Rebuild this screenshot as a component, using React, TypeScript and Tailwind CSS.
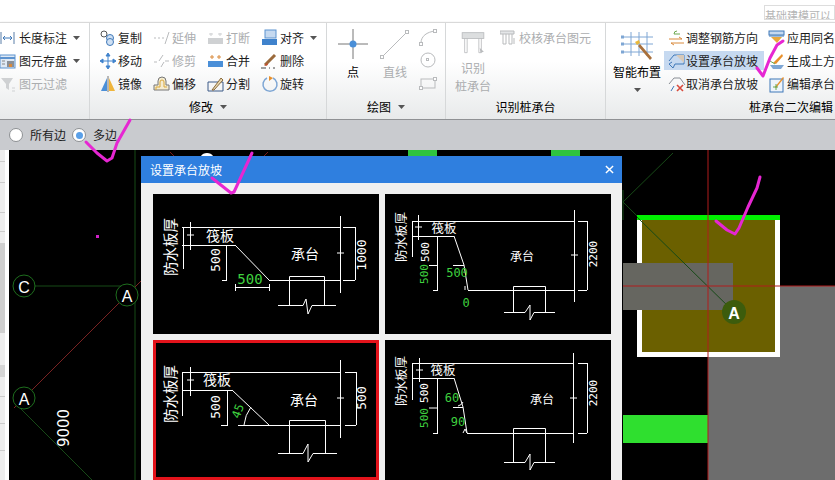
import type { ReactNode } from "react";

const CJK = { fontFamily: '"Noto Sans CJK SC", "Liberation Sans", sans-serif' };

const blue = "#4a8fd8";
const gray = "#b9bbbd";

function Icon({ children }: { children: ReactNode }) {
  return (
    <svg viewBox="0 0 18 18" className="w-[18px] h-[18px] shrink-0" fill="none">
      {children}
    </svg>
  );
}

const icons: Record<string, ReactNode> = {
  length: (
    <>
      <path d="M1 3v12M14 3v12" stroke="#5b7fa8" />
      <path d="M3 9h9M5 7 3 9l2 2M10 7l2 2-2 2" stroke="#3f78b8" />
    </>
  ),
  store: (
    <>
      <rect x="0" y="3" width="15" height="13" fill="#dfe9f4" stroke="#5d93cf" />
      <path d="M0 6h15" stroke="#5d93cf" strokeWidth="2" />
      <path d="M2 9h3M2 12h3" stroke="#888" />
      <rect x="7" y="9" width="7" height="6" fill="#8a8f96" />
      <rect x="9" y="12" width="3" height="3" fill="#d98a3c" />
    </>
  ),
  funnel: (
    <>
      <path d="M1 3h12L9 9v6l-3-2V9z" fill="#cfd1d3" />
      <path d="M12 13h3M12 16h3" stroke="#cfd1d3" />
    </>
  ),
  copy: (
    <>
      <circle cx="5" cy="5" r="3" stroke="#555" fill="#fff" />
      <circle cx="11" cy="9" r="3.5" stroke="#3f78b8" fill="#cfe0f3" />
      <circle cx="11" cy="13" r="3.5" stroke="#3f78b8" fill="#cfe0f3" />
    </>
  ),
  move: (
    <path
      d="M9 1 7 4h4zM9 17l-2-3h4zM1 9l3-2v4zM17 9l-3-2v4zM9 4v10M4 9h10"
      fill="#3f82cc"
      stroke="#3f82cc"
    />
  ),
  mirror: (
    <>
      <path d="M8 3v13H2z" fill="#4a8fd8" />
      <path d="M10 3v13h6z" fill="#efb53c" />
      <path d="M9 1v16" stroke="#777" />
    </>
  ),
  extend: <path d="M1 9h2M5 9h2M9 9h2M12 15l4-12" stroke={gray} />,
  trim: <path d="M1 10h3M6 9l4-6M8 15l3-5M12 9h4" stroke={gray} />,
  break: (
    <>
      <rect x="1" y="9" width="15" height="6" fill="#cfd1d3" />
      <path d="M4 4v3M13 4v3M2 5h4M11 5h4" stroke="#cfd1d3" />
    </>
  ),
  merge: (
    <>
      <rect x="1" y="9" width="15" height="6" fill="#4a8fd8" />
      <path d="M5 3v4M12 3v4M3 5h4M10 5h4" stroke="#d98a3c" />
    </>
  ),
  align: (
    <>
      <rect x="4" y="1" width="11" height="8" fill="#c5d9f0" stroke="#5d93cf" />
      <rect x="1" y="10" width="15" height="6" fill="#3f82cc" />
    </>
  ),
  del: (
    <>
      <path d="M4 13 14 3" stroke="#9b6a3c" strokeWidth="3" />
      <path d="M3 14l3-3 1 2z" fill="#c94a2c" />
      <path d="M0 16h5M8 16h1M12 16h2" stroke="#444" />
    </>
  ),
  offset: (
    <>
      <path d="M1 15V10h4V6a4 4 0 0 1 8 0v4h3v5z" stroke="#777" fill="#f5ecd0" />
      <path d="M3 15v-3h4V7a2 2 0 0 1 4 0v5h3" stroke="#d9a83c" />
    </>
  ),
  split: (
    <>
      <path d="M1 7h15v9H1z" stroke="#3c5a88" />
      <path d="M5 15 14 3l2 2-9 10z" fill="#e8d8b0" stroke="#8a6a3c" />
    </>
  ),
  rotate: (
    <>
      <path d="M6 3a7 7 0 1 0 6 0" stroke="#7ea6d4" strokeWidth="1.5" />
      <path d="M8 1l4 2-4 3z" fill="#e8902c" />
    </>
  ),
  check: (
    <>
      <path d="M0 2h14v3H0z" fill="#e4e6e8" stroke={gray} />
      <path d="M3 5v10h3V5M9 5v10h3V5" stroke={gray} />
      <path d="M14 9v6" stroke={gray} />
    </>
  ),
  adjust: (
    <>
      <path d="M9 2a3 3 0 0 0-3 3h6" stroke="#6aa84f" />
      <path d="M1 10h13l-3-2M16 14H3l3 2" stroke="#d98a3c" />
    </>
  ),
  setSlope: (
    <>
      <path d="M1 9l5-6h10v9H7l-2 4-4-4 3-2" stroke="#3f78b8" />
      <path d="M8 3l8 8V3z" fill="#d8c9b8" />
    </>
  ),
  cancelSlope: (
    <>
      <path d="M1 9l5-6h6l5 7" stroke="#8a8f96" />
      <path d="M3 16l3-5" stroke="#3f78b8" />
      <path d="M9 10l6 6M15 10l-6 6" stroke="#d84a3c" strokeWidth="1.6" />
    </>
  ),
  apply: (
    <>
      <rect x="1" y="2" width="15" height="4" fill="#c5d9f0" stroke="#3f78b8" />
      <path d="M3 8h11l-5 6z" fill="#e8a83c" />
      <path d="M1 7h15" stroke="#3f78b8" />
    </>
  ),
  earth: (
    <>
      <path d="M5 11 14 2l1 2-7 8z" fill="#e8902c" />
      <path d="M2 13h14l-3 4H5z" fill="#7ea6d4" />
      <path d="M2 9l5 3" stroke="#6aa84f" />
    </>
  ),
  edit: (
    <>
      <rect x="2" y="4" width="13" height="13" stroke="#3f78b8" fill="#eef4fb" />
      <path d="M7 12 15 2l1 1-8 10z" fill="#e8902c" />
      <path d="M5 12h5M8 9v6" stroke="#6aa84f" />
    </>
  ),
};

function Caret({ className = "" }: { className?: string }) {
  return (
    <svg viewBox="0 0 7 4" className={`w-[7px] h-[4px] shrink-0 ${className}`}>
      <path d="M0 0h7L3.5 4z" fill="#555" />
    </svg>
  );
}

function Tool({
  icon,
  label,
  off,
  caret,
  gap = "gap-px",
}: {
  icon: string;
  label: string;
  off?: boolean;
  caret?: boolean;
  gap?: string;
}) {
  return (
    <div className={`flex h-[23px] items-center whitespace-nowrap ${gap}`}>
      <Icon>{icons[icon]}</Icon>
      <span className={off ? "text-[#abadaf]" : "text-[#1c1c1c]"}>{label}</span>
      {caret && <Caret className="ml-[5px]" />}
    </div>
  );
}

function Group({
  width,
  label,
  caret,
  end,
  children,
}: {
  width: string;
  label: string;
  caret?: boolean;
  end?: boolean;
  children: ReactNode;
}) {
  return (
    <div className={`flex shrink-0 flex-col border-r border-[#d6d8d9] ${width}`}>
      <div className="flex h-[72px] pt-[3px]">{children}</div>
      {label ? (
        <div
          className={`flex h-[24px] items-center gap-[7px] text-black ${end ? "justify-start pl-[143px]" : "justify-center"}`}
        >
          <span className="whitespace-nowrap">{label}</span>
          {caret && <Caret />}
        </div>
      ) : null}
    </div>
  );
}

function Ribbon() {
  return (
    <div
      className="flex h-[98px] shrink-0 border-y border-t-[#d9d9d9] border-b-[#8f9194] bg-gradient-to-b from-white from-40% to-[#e8eaeb] text-[12px] leading-none shadow-[0_1px_2px_#0005]"
      style={CJK}
    >
      <Group width="w-[90px]" label="">
        <div className="flex flex-col">
          <Tool icon="length" label="长度标注" caret />
          <Tool icon="store" label="图元存盘" caret />
          <Tool icon="funnel" label="图元过滤" off />
        </div>
      </Group>
      <Group width="w-[237px]" label="修改" caret>
        <div className="grid grid-cols-[54px_54px_54px_54px] pl-[9px]">
          <Tool icon="copy" label="复制" />
          <Tool icon="extend" label="延伸" off />
          <Tool icon="break" label="打断" off />
          <Tool icon="align" label="对齐" caret />
          <Tool icon="move" label="移动" />
          <Tool icon="trim" label="修剪" off />
          <Tool icon="merge" label="合并" />
          <Tool icon="del" label="删除" />
          <Tool icon="mirror" label="镜像" />
          <Tool icon="offset" label="偏移" />
          <Tool icon="split" label="分割" />
          <Tool icon="rotate" label="旋转" />
        </div>
      </Group>
      <Group width="w-[119px]" label="绘图" caret>
        <div className="flex pl-[10px]">
          <div className="flex w-[32px] flex-col items-center">
            <svg viewBox="0 0 32 36" className="h-[36px] w-[32px]">
              <path d="M1 18h30M16 3v30" stroke="#777" />
              <circle cx="16" cy="18" r="3.5" fill={blue} />
            </svg>
            <span className="mt-[4px]">点</span>
          </div>
          <div className="ml-[11px] flex w-[30px] flex-col items-center text-[#abadaf]">
            <svg viewBox="0 0 30 36" className="h-[36px] w-[30px]" fill="none">
              <path d="M2 31 27 6" stroke={gray} />
              <rect x="0.500" y="29.500" width="3" height="3" fill="#fff" stroke={gray} />
              <rect x="25.500" y="4.500" width="3" height="3" fill="#fff" stroke={gray} />
            </svg>
            <span className="mt-[4px]">直线</span>
          </div>
          <div className="ml-[8px] flex flex-col items-center">
            <svg viewBox="0 0 20 66" className="h-[66px] w-[20px]" fill="none" stroke={gray}>
              <path d="M3 17c0-7 6-11 14-12" />
              <rect x="1.500" y="16.500" width="3" height="3" fill="#fff" />
              <rect x="15.500" y="3.500" width="3" height="3" fill="#fff" />
              <circle cx="10" cy="34" r="7" />
              <rect x="8.500" y="32.500" width="2" height="2" />
              <rect x="3" y="53" width="14" height="9" />
              <rect x="1.500" y="60.500" width="3" height="3" fill="#fff" />
              <rect x="15.500" y="51.500" width="3" height="3" fill="#fff" />
            </svg>
          </div>
        </div>
      </Group>
      <Group width="w-[160px]" label="识别桩承台">
        <div className="flex pl-[8px]">
          <div className="flex w-[38px] flex-col items-center text-[#abadaf]">
            <svg viewBox="0 0 38 36" className="h-[36px] w-[38px]" fill="none">
              <rect x="6" y="8" width="26" height="7" fill="#dcdedf" stroke={gray} />
              <path d="M9 15v17h3V15M26 15v17h3V15" stroke={gray} />
              <path d="M27 26l5 5-4 1z" fill={gray} />
            </svg>
            <span className="mt-[3px] leading-[18px]">识别</span>
            <span className="leading-[18px]">桩承台</span>
          </div>
          <div className="ml-[8px]">
            <Tool icon="check" label="校核承台图元" off />
          </div>
        </div>
      </Group>
      <Group width="flex-1" label="桩承台二次编辑" end>
        <div className="flex pl-[7px]">
          <div className="flex w-[48px] flex-col items-center">
            <svg viewBox="0 0 48 36" className="h-[36px] w-[48px]" fill="none">
              <path d="M11 11h29M11 18h29M11 26h29M18 6v24M26 6v24M34 6v24" stroke="#7ea6d4" />
              <path d="M8 11h3M8 18h3M8 26h3" stroke="#7ea6d4" strokeWidth="3" />
              <path d="M27 18l12 14-2 2-12-14z" fill="#a8703c" />
              <path d="M22 16l4-2 1 3-3 2z" fill="#e8b83c" />
            </svg>
            <span className="mt-[4px] whitespace-nowrap">智能布置</span>
            <Caret className="mt-[10px]" />
          </div>
          <div className="ml-[3px] flex w-[100px] flex-col">
            <div className="pl-[4px]">
              <Tool icon="adjust" label="调整钢筋方向" gap="gap-0" />
            </div>
            <div className="my-[2px] h-[19px] bg-[#c6d9f0] pl-[4px] [&>div]:h-[19px]">
              <Tool icon="setSlope" label="设置承台放坡" gap="gap-0" />
            </div>
            <div className="pl-[4px]">
              <Tool icon="cancelSlope" label="取消承台放坡" gap="gap-0" />
            </div>
          </div>
          <div className="ml-[4px] flex flex-col">
            <Tool icon="apply" label="应用同名" gap="gap-px" />
            <Tool icon="earth" label="生成土方" gap="gap-px" />
            <Tool icon="edit" label="编辑承台" gap="gap-px" />
          </div>
        </div>
      </Group>
    </div>
  );
}

function Radio({ label, on }: { label: string; on?: boolean }) {
  return (
    <label className="flex items-center gap-[7px]">
      <span className="flex h-[14px] w-[14px] items-center justify-center rounded-full border border-[#8d9093] bg-white">
        {on && <span className="h-[7px] w-[7px] rounded-full bg-[#5aa0e8]" />}
      </span>
      <span>{label}</span>
    </label>
  );
}

function CadText({
  x,
  y,
  size = 14,
  rot,
  green,
  num,
  children,
}: {
  x: number;
  y: number;
  size?: number;
  rot?: number;
  green?: boolean;
  num?: boolean;
  children: string;
}) {
  return (
    <text
      x={x}
      y={y}
      fontSize={size}
      textAnchor="middle"
      dominantBaseline="central"
      fill={green ? "#3fd13f" : "#fff"}
      transform={rot ? `rotate(${rot} ${x} ${y})` : undefined}
      style={{ fontFamily: num ? '"DejaVu Sans Mono", monospace' : CJK.fontFamily }}
    >
      {children}
    </text>
  );
}

function Sketch({ d, children }: { d: string; children: ReactNode }) {
  return (
    <svg viewBox="0 0 226 140" className="block h-[140px] w-[226px]" fill="none">
      <path d={d} stroke="#fff" strokeWidth="1" />
      {children}
    </svg>
  );
}

function SlopeDialog() {
  return (
    <div className="absolute left-[141px] top-[6px] w-[481px] bg-[#f0f0f0]" style={CJK}>
      <div className="flex h-[27px] items-center justify-between bg-[#2f7fdf] pl-[9px] pr-[8px] text-[12px] text-white">
        <span>设置承台放坡</span>
        <svg viewBox="0 0 10 10" className="h-[9px] w-[9px]">
          <path d="M1 1l8 8M9 1l-8 8" stroke="#fff" strokeWidth="1.6" />
        </svg>
      </div>
      <div className="grid grid-cols-[226px_226px] gap-[6px] pb-[10px] pl-[12px] pt-[11px]">
        <div className="bg-black">
          <Sketch d="M29 33.500H187M190 33.500H202M187.500 22V99M184 59H191M202.500 33V86M190 86.500H202M29 51.500H82M30.500 33V75M37.500 28V56M34 41H41M82 51 116 86M116 86.500H187M73.500 51V86M69 86.500H74M82 93.500H116M82.500 90V97M116.500 90V97M136.500 111V82.500H171.500V111M125 111.500H150L153 105 155 120 159 111.500H183">
            <CadText x={16} y={53} rot={-90} size={14.500}>防水板厚</CadText>
            <CadText x={67} y={41}>筏板</CadText>
            <CadText x={62} y={66} rot={-90} size={13} num>500</CadText>
            <CadText x={97} y={85} size={14} green num>500</CadText>
            <CadText x={152} y={59}>承台</CadText>
            <CadText x={208} y={61} rot={-90} size={13} num>1000</CadText>
          </Sketch>
        </div>
        <div className="bg-black">
          <Sketch d="M27 27.500H189M193 27.500H202M189.500 16V108M186 61H193M202.500 27V96M193 96.500H202M27 42.500H69M27.500 27V63M33.500 21V46M30 33H37M69 42 79 71 83 96M83 96.500H189M52.500 42V96M48 42.500H53M44 71.500H53M48 96.500H53M68 71.500H79M80 92V96M128.500 118V92.500H160.500V118M119 118.500H140L145 111V126L149 118.500H170">
            <CadText x={15} y={43} rot={-90} size={12.500}>防水板厚</CadText>
            <CadText x={59} y={33} size={12.500}>筏板</CadText>
            <CadText x={40} y={58} rot={-90} size={11} num>500</CadText>
            <CadText x={39} y={80} rot={-90} size={11} green num>500</CadText>
            <CadText x={72} y={79} size={12} green num>500</CadText>
            <CadText x={81} y={109} size={12} green num>0</CadText>
            <CadText x={137} y={61} size={12}>承台</CadText>
            <CadText x={208} y={60} rot={-90} size={11} num>2200</CadText>
          </Sketch>
        </div>
        <div className="bg-black outline-3 -outline-offset-3 outline-[#e3131b]">
          <Sketch d="M29 32.500H187M192 32.500H203M187.500 20V98M184 58H191M203.500 32V85M192 85.500H203M29 50.500H79M29.500 32V76M37.500 27V56M34 40H41M79 50 116 85M85 85.500H187M74.500 50V85M68 85.500H75M98 67Q92 75 91 85M136.500 113V80.500H172.500V113M125 113.500H150L155 104V122L160 113.500H184">
            <CadText x={16} y={54} rot={-90} size={14.500}>防水板厚</CadText>
            <CadText x={64} y={39}>筏板</CadText>
            <CadText x={62} y={67} rot={-90} size={13} num>500</CadText>
            <CadText x={85} y={71} rot={-70} size={12} green num>45</CadText>
            <CadText x={151} y={59}>承台</CadText>
            <CadText x={208} y={58} rot={-90} size={13} num>500</CadText>
          </Sketch>
        </div>
        <div className="bg-black">
          <Sketch d="M27 23.500H188M193 23.500H202M188.500 13V103M185 58H192M202.500 23V93M193 93.500H202M27 38.500H69M27.500 23V60M34.500 18V42M31 30H38M69 38 78 67 82 93M82 93.500H188M52.500 38V93M48 38.500H53M44 68H53M48 93.500H53M68 67.500H78M78 93 80 89 82 93M73 66Q77 65 78 62M128.500 122V88.500H160.500V122M128 93.500H160M119 122.500H140L145 114V130L149 122.500H170">
            <CadText x={15} y={41} rot={-90} size={12.500}>防水板厚</CadText>
            <CadText x={58} y={29} size={12.500}>筏板</CadText>
            <CadText x={39} y={53} rot={-90} size={11} num>500</CadText>
            <CadText x={39} y={78} rot={-90} size={11} green num>500</CadText>
            <CadText x={67} y={58} size={12} green num>60</CadText>
            <CadText x={73} y={82} size={12} green num>90</CadText>
            <CadText x={157} y={58} size={12}>承台</CadText>
            <CadText x={208} y={53} rot={-90} size={11} num>2200</CadText>
          </Sketch>
        </div>
      </div>
    </div>
  );
}

function AxisMark({ x, y, label, fill }: { x: number; y: number; label: string; fill?: string }) {
  return (
    <>
      <circle cx={x} cy={y} r={fill ? 12 : 11} fill={fill ?? "#000"} stroke={fill ? "none" : "#1e6e1e"} />
      <text
        x={x}
        y={y + 1}
        fontSize="16"
        fill="#fff"
        textAnchor="middle"
        dominantBaseline="central"
        style={{ fontFamily: '"Liberation Sans", sans-serif', fontWeight: fill ? 700 : 400 }}
      >
        {label}
      </text>
    </>
  );
}

function CadCanvas() {
  return (
    <svg viewBox="0 150 835 330" className="absolute inset-0 h-[330px] w-[835px]" fill="none">
      <rect x="408" y="150" width="29" height="6" fill="#2fc43f" />
      <rect x="551" y="150" width="29" height="6" fill="#2fc43f" />
      <path d="M201 156c2-4 10-4 12 0z" fill="#fff" />
      <path d="M170 152l4 4M268 152l-4 4" stroke="#7a1a1a" />
      <path d="M135 150V480M24 286H127M623 202 673 153M623 202 734 312M623 190V220" stroke="#174a17" />
      <path d="M14 408 141 281" stroke="#7a2222" />
      <path d="M20 408 92 480" stroke="#174a17" />
      <rect x="96" y="235" width="3" height="3" fill="#d020c8" />
      <AxisMark x={24} y={286} label="C" />
      <AxisMark x={127} y={295} label="A" />
      <AxisMark x={24} y={398} label="A" />
      <text
        x={64}
        y={428}
        fontSize="15"
        fill="#fff"
        textAnchor="middle"
        dominantBaseline="central"
        transform="rotate(-90 64 428)"
        style={{ fontFamily: '"DejaVu Sans", sans-serif' }}
      >
        9000
      </text>

      <rect x="708" y="286" width="127" height="194" fill="#6d6d6d" />
      <rect x="623" y="415" width="85" height="28" fill="#2fdf2f" />
      <rect x="639.500" y="217.500" width="138" height="137" fill="#6b6000" stroke="#fff" strokeWidth="5" />
      <rect x="637" y="215" width="143" height="5" fill="#00f000" />
      <rect x="623" y="263" width="110" height="47" fill="#666660" />
      <path d="M637 217 734 312" stroke="#174a17" />
      <path d="M708 150V480M623 286H835" stroke="#b01c1c" />
      <AxisMark x={734} y={312} label="A" fill="#3c5c0c" />
    </svg>
  );
}

function Sidebar() {
  return (
    <div className="absolute bottom-0 left-0 top-0 w-[9px] bg-white">
      <div className="flex h-full w-[5px] flex-col bg-[#eeeeee]">
        <div className="h-[12px] border-b border-[#ccc]" />
        <div className="h-[21px] border-b border-[#ccc]" />
        <div className="h-[30px] border-b border-[#ccc]" />
        <div className="h-[19px] border-b border-[#ccc]" />
        <div className="mt-[11px] h-[90px] bg-[#cfcfcf]" />
        <div className="mt-[32px] h-[12px] bg-[#d5d5d5]" />
        <div className="h-[20px] border-b border-[#ccc]" />
        <div className="h-[27px] border-b border-[#ccc]" />
        <div className="h-[27px] border-b border-[#ccc]" />
      </div>
    </div>
  );
}

function Checks() {
  return (
    <svg
      viewBox="0 0 835 480"
      className="pointer-events-none absolute inset-0 z-10 h-[480px] w-[835px]"
      fill="none"
      stroke="#e626d2"
      strokeWidth="3"
      strokeLinecap="round"
      strokeLinejoin="round"
    >
      <path d="M86 142 97 153 107 161 112 158 117 143 130 120" />
      <path d="M212 178 231 193 234 192 252 153" />
      <path d="M757 68 763 76 770 58 777 45 783 41" />
      <path d="M716 221 727 230 735 234 739 228 748 207 757 188 760 177" />
    </svg>
  );
}

export default function App() {
  return (
    <div className="relative flex h-[480px] w-[835px] flex-col overflow-hidden bg-white">
      <div className="flex h-[22px] shrink-0 justify-end overflow-hidden pt-[5px]">
        <div
          className="h-[15px] w-[71px] overflow-hidden whitespace-nowrap border border-[#dddddd] pt-[4px] text-[11px] leading-[11px] text-[#b5b5b5]"
          style={CJK}
        >
          基础建模可以
        </div>
      </div>
      <Ribbon />
      <div
        className="flex h-[30px] shrink-0 items-center gap-[6px] bg-[#c9cbcf] pl-[9px] text-[12px] text-[#1c1c1c]"
        style={CJK}
      >
        <Radio label="所有边" />
        <Radio label="多边" on />
      </div>
      <div className="relative flex-1 bg-black">
        <CadCanvas />
        <Sidebar />
        <SlopeDialog />
      </div>
      <Checks />
    </div>
  );
}
